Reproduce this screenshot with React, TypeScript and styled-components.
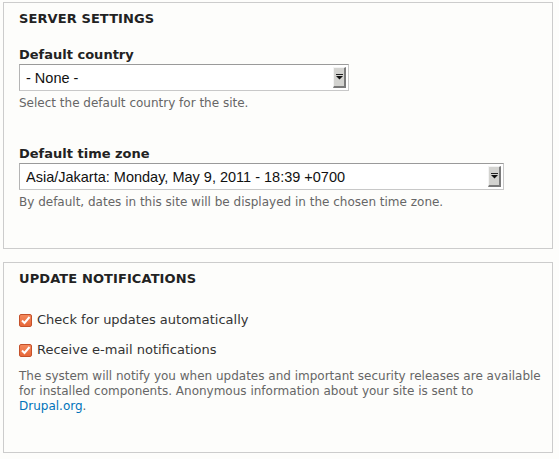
import React from 'react';
import styled, { createGlobalStyle } from 'styled-components';

const GlobalStyle = createGlobalStyle`
  html, body {
    margin: 0;
    padding: 0;
    background: #fdfdfb;
  }
  body {
    font-family: "DejaVu Sans", sans-serif;
    color: #333;
  }
`;

const Page = styled.div`
  padding: 2px 6px 0 3px;
  display: flex;
  flex-direction: column;
  gap: 13px;
`;

const Fieldset = styled.section<{ $height: number }>`
  box-sizing: border-box;
  width: 550px;
  height: ${(p) => p.$height}px;
  border: 1px solid #cccccc;
  padding: 8px 8px 0 15px;
`;

const Legend = styled.h2`
  margin: 0;
  font-size: 13px;
  line-height: 16px;
  font-weight: bold;
  text-transform: uppercase;
  color: #222;
  letter-spacing: 0.1px;
`;

const Item = styled.div<{ $top: number }>`
  margin-top: ${(p) => p.$top}px;
`;

const Label = styled.label`
  display: block;
  font-size: 13px;
  line-height: 16px;
  font-weight: bold;
  color: #222;
  margin-bottom: 1px;
`;

const SelectWrap = styled.div<{ $width: number }>`
  position: relative;
  width: ${(p) => p.$width}px;
  height: 27px;
`;

const Select = styled.select`
  appearance: none;
  -webkit-appearance: none;
  box-sizing: border-box;
  width: 100%;
  height: 100%;
  margin: 0;
  padding: 0 20px 0 6px;
  border: 1px solid;
  border-color: #9a9a9a #c8c8c8 #c8c8c8 #b4b4b4;
  border-radius: 0;
  background: #fff;
  font-family: "Liberation Sans", Arial, sans-serif;
  font-size: 14.5px;
  color: #111;
  outline: none;
`;

const ArrowButton = styled.span`
  position: absolute;
  right: 3px;
  top: 3px;
  box-sizing: border-box;
  width: 13px;
  height: 21px;
  background: #d3d3d0;
  border-top: 1px solid #f4f4f4;
  border-left: 1px solid #f4f4f4;
  border-right: 2px solid #7a7a7a;
  border-bottom: 2px solid #7a7a7a;
  pointer-events: none;
  display: flex;
  align-items: center;
  justify-content: center;

  svg {
    display: block;
  }
`;

const Description = styled.div<{ $top?: number }>`
  font-size: 12px;
  line-height: 15px;
  color: #666;
  margin-top: ${(p) => p.$top ?? 5}px;
`;

const CheckRow = styled.label<{ $top: number }>`
  display: flex;
  align-items: center;
  gap: 5px;
  margin-top: ${(p) => p.$top}px;
  font-size: 13px;
  line-height: 16px;
  color: #333;
`;

const Box = styled.span`
  box-sizing: border-box;
  width: 13px;
  height: 13px;
  border: 1px solid #c4512a;
  border-radius: 2px;
  background: linear-gradient(#f4895c, #e8683a);
  display: flex;
  align-items: center;
  justify-content: center;
`;

const Link = styled.a`
  color: #0073ba;
  text-decoration: none;
`;

const Arrow = () => (
  <svg width="7" height="6" viewBox="0 0 7 6">
    <rect x="0" y="0" width="7" height="1" fill="#222" />
    <path d="M0 2 H7 L3.5 5.5 Z" fill="#111" />
  </svg>
);

const Check = () => (
  <svg width="11" height="11" viewBox="0 0 11 11">
    <path d="M2 5.5 L4.5 8 L9.5 2" fill="none" stroke="#fff" strokeWidth="2" />
  </svg>
);

const SelectField: React.FC<{ width: number; value: string }> = ({ width, value }) => (
  <SelectWrap $width={width}>
    <Select defaultValue={value}>
      <option value={value}>{value}</option>
    </Select>
    <ArrowButton>
      <Arrow />
    </ArrowButton>
  </SelectWrap>
);

export default function App() {
  return (
    <>
      <GlobalStyle />
      <Page>
        <Fieldset $height={247}>
          <Legend>Server settings</Legend>
          <Item $top={20}>
            <Label>Default country</Label>
            <SelectField width={330} value="- None -" />
            <Description>Select the default country for the site.</Description>
          </Item>
          <Item $top={35}>
            <Label>Default time zone</Label>
            <SelectField width={485} value="Asia/Jakarta: Monday, May 9, 2011 - 18:39 +0700" />
            <Description>
              By default, dates in this site will be displayed in the chosen time zone.
            </Description>
          </Item>
        </Fieldset>
        <Fieldset $height={191}>
          <Legend>Update notifications</Legend>
          <CheckRow $top={25}>
            <Box>
              <Check />
            </Box>
            Check for updates automatically
          </CheckRow>
          <CheckRow $top={14}>
            <Box>
              <Check />
            </Box>
            Receive e-mail notifications
          </CheckRow>
          <Description $top={11}>
            The system will notify you when updates and important security releases are available
            for installed components. Anonymous information about your site is sent to{' '}
            <Link href="#">Drupal.org</Link>.
          </Description>
        </Fieldset>
      </Page>
    </>
  );
}
